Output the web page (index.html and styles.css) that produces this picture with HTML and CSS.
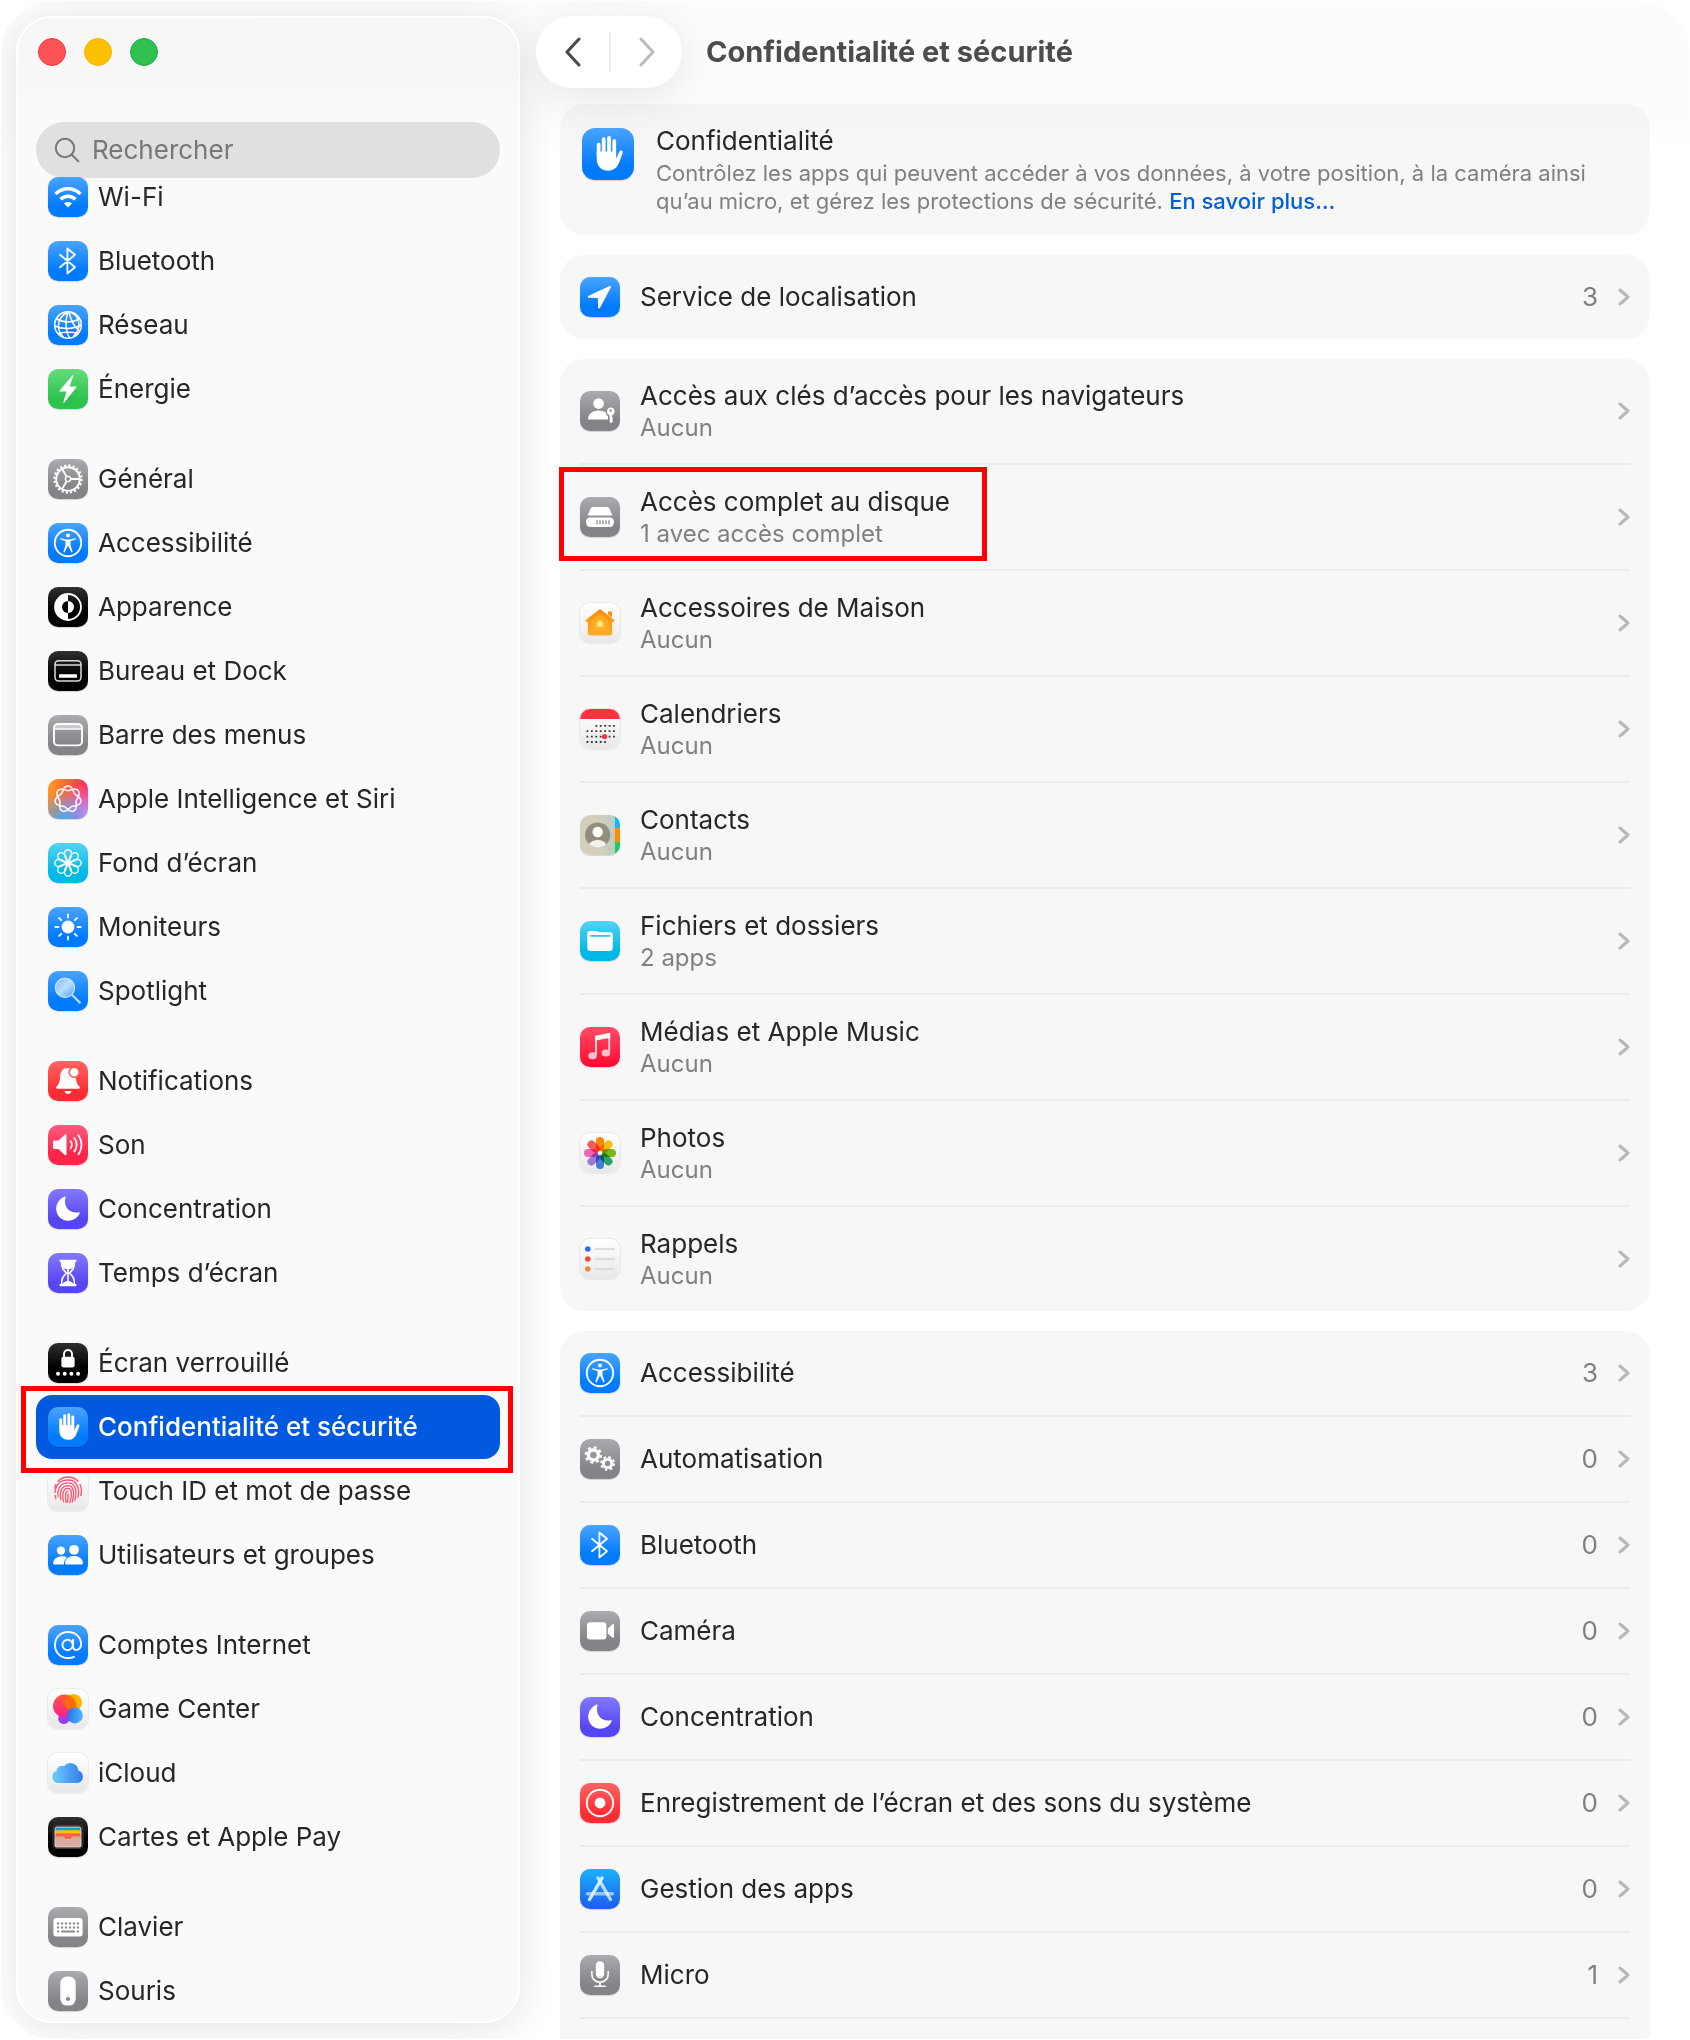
FILE: index.html
```html
<!DOCTYPE html>
<html lang="fr">
<head>
  <meta charset="UTF-8">
  <meta name="viewport" content="width=device-width, initial-scale=1.0">
  <title>Confidentialité et sécurité</title>
  <link rel="stylesheet" href="styles.css">
</head>
<body>
  <!-- icon set, every symbol is drawn on a 40x40 tile -->
  <svg class="sprite" aria-hidden="true">
    <defs>
      <linearGradient id="g-lens" x1="0" y1="0" x2="1" y2="1">
        <stop offset="0" stop-color="#fff" stop-opacity=".35"/><stop offset=".5" stop-color="#fff" stop-opacity=".7"/><stop offset="1" stop-color="#fff" stop-opacity=".2"/>
      </linearGradient>
      <linearGradient id="g-cloud" x1="0" y1="0" x2="1" y2="0">
        <stop offset="0" stop-color="#6fcdf8"/><stop offset="1" stop-color="#2f7bf0"/>
      </linearGradient>
      <linearGradient id="g-pink" x1="0" y1="0" x2="0" y2="1">
        <stop offset="0" stop-color="#ff5a3c"/><stop offset="1" stop-color="#ff1e8c"/>
      </linearGradient>
      <linearGradient id="g-ball" x1="0" y1="0" x2="1" y2="0">
        <stop offset="0" stop-color="#2a6cf0"/><stop offset="1" stop-color="#38b6ff"/>
      </linearGradient>
      <linearGradient id="g-home" x1="0" y1="0" x2="0" y2="1">
        <stop offset="0" stop-color="#ff8a00"/><stop offset="1" stop-color="#ffab2e"/>
      </linearGradient>
    </defs>

    <symbol id="i-wifi" viewBox="0 0 40 40">
      <path d="M7.6 17a17.4 17.4 0 0 1 24.8 0M12.6 22.2a10.6 10.6 0 0 1 14.8 0" fill="none" stroke="#fff" stroke-width="3.6"/>
      <path d="M20 30.6l-4-4.2a5.8 5.8 0 0 1 8 0z" fill="#fff"/>
    </symbol>
    <symbol id="i-bluetooth" viewBox="0 0 40 40">
      <path d="M12 13.8l15 12.4-7.6 6.3V7.5l7.6 6.3L12 26.2" fill="none" stroke="#fff" stroke-width="1.8" stroke-linecap="round" stroke-linejoin="round"/>
    </symbol>
    <symbol id="i-globe" viewBox="0 0 40 40">
      <g fill="none" stroke="#fff" stroke-width="1.5">
        <circle cx="20" cy="20" r="13.3"/>
        <path d="M20 7c-6 3-9.5 8-9.5 13.5 0 5 2 9 5 11.5M20 7c-2 6-2.5 12-1.5 17 .6 4 1.5 6.5 3 9M21 7c1.5 7 4 14 10.5 19M22 7c6 2 8.5 7 9 12 .2 5-2 9-5.5 12"/>
        <path d="M8.5 14c7 4 16 4 23 0M7 21c7 3.5 18 3.5 26-1M10 28.5c6-1.5 14-1.5 20-.5"/>
      </g>
    </symbol>
    <symbol id="i-bolt" viewBox="0 0 40 40">
      <path d="M24.4 6.4L11.6 21.4c-.4.5-.2 1 .5 1h6.3l-3 10.6c-.2.7.5 1 .9.5l12-15c.4-.5.2-1-.5-1h-6.2l3.6-10.6c.3-.8-.4-1-.8-.5z" fill="#fff"/>
    </symbol>
    <symbol id="i-gear" viewBox="0 0 40 40">
      <g fill="none" stroke="#fff">
        <circle cx="20" cy="20" r="13.6" stroke-width="2.2" stroke-dasharray="2.1 2.172"/>
        <circle cx="20" cy="20" r="11.8" stroke-width="2"/>
        <circle cx="20" cy="20" r="2.6" stroke-width="1.4"/>
        <path d="M22.6 20H32M18.7 17.7L14 9.7M18.7 22.3L14 30.3" stroke-width="1.8"/>
      </g>
    </symbol>
    <symbol id="i-access" viewBox="0 0 40 40">
      <circle cx="20" cy="20" r="13.2" fill="none" stroke="#fff" stroke-width="1.9"/>
      <circle cx="20" cy="12.6" r="2" fill="#fff"/>
      <path d="M13 15.3l5 1.2h4l5-1.2c1-.2 1.2 1 .3 1.3l-4.8 1.5v4l2 6.4c.3 1-.9 1.3-1.3.4L20.3 23h-.6l-2.9 5.9c-.4.9-1.6.6-1.3-.4l2-6.4v-4l-4.8-1.5c-.9-.3-.7-1.5.3-1.3z" fill="#fff"/>
    </symbol>
    <symbol id="i-contrast" viewBox="0 0 40 40">
      <circle cx="20" cy="20" r="13" fill="none" stroke="#fff" stroke-width="1.8"/>
      <path d="M20 7a13 13 0 0 0 0 26z" fill="#fff"/>
      <path d="M20 14a6 6 0 0 0 0 12z" fill="#000"/>
      <path d="M20 14a6 6 0 0 1 0 12z" fill="#fff"/>
    </symbol>
    <symbol id="i-dock" viewBox="0 0 40 40">
      <rect x="7" y="9.8" width="26" height="20.2" rx="3.5" fill="none" stroke="#ddd" stroke-width="1.5"/>
      <path d="M7 14h26" stroke="#ddd" stroke-width="1.3"/>
      <rect x="11" y="23.2" width="18" height="3.6" rx=".8" fill="#fff"/>
    </symbol>
    <symbol id="i-menubar" viewBox="0 0 40 40">
      <rect x="6" y="9" width="28" height="21.4" rx="4" fill="none" stroke="#fff" stroke-width="1.9"/>
      <path d="M7 10h26v3.8H7z" fill="#fff" opacity=".45"/>
      <path d="M7 14h26" stroke="#fff" stroke-width="1.5"/>
    </symbol>
    <symbol id="i-siri" viewBox="0 0 40 40">
      <path d="M20 6.8C24.8 6.8 25.1 12.9 26.6 14.8S33.9 18.3 32.9 22.9 25.8 26.5 23.6 27.6 18.6 34 14.3 31.9 12.3 24.2 11.8 21.9 6.7 15.5 9.7 11.8 17.6 11.6 20 11.6 27.3 8 30.3 11.8 28.7 19.5 28.2 21.9 30 29.8 25.7 31.9 18.5 28.6 16.4 27.6 8.2 27.6 7.1 22.9 11.9 16.6 13.4 14.8 15.2 6.8 20 6.8z" fill="none" stroke="#fff" stroke-width="1.7" stroke-opacity=".9"/>
    </symbol>
    <symbol id="i-flower" viewBox="0 0 40 40">
      <g fill="none" stroke="#fff" stroke-width="1.4">
        <g id="petal-pair">
          <path d="M20 20c-1.2-3-3.6-5.5-3.6-9a3.6 4.2 0 0 1 7.2 0c0 3.5-2.4 6-3.6 9zM20 20c1.2 3 3.6 5.5 3.6 9a3.6 4.2 0 0 1-7.2 0c0-3.5 2.4-6 3.6-9z"/>
        </g>
        <use href="#petal-pair" transform="rotate(45 20 20)"/>
        <use href="#petal-pair" transform="rotate(90 20 20)"/>
        <use href="#petal-pair" transform="rotate(135 20 20)"/>
      </g>
    </symbol>
    <symbol id="i-sun" viewBox="0 0 40 40">
      <circle cx="20" cy="20" r="6.4" fill="#fff"/>
      <path d="M20 7.4v3M20 29.6v3M7.4 20h3M29.6 20h3M11.1 11.1l2.1 2.1M26.8 26.8l2.1 2.1M11.1 28.9l2.1-2.1M26.8 13.2l2.1-2.1" stroke="#fff" stroke-width="1.9" stroke-linecap="round"/>
    </symbol>
    <symbol id="i-spotlight" viewBox="0 0 40 40">
      <circle cx="17" cy="16.8" r="9.6" fill="url(#g-lens)" stroke="#cfe6ff" stroke-width="1.2"/>
      <path d="M24.4 24.2l7.4 7.4" stroke="#b8dcff" stroke-width="2.2" stroke-linecap="round"/>
    </symbol>
    <symbol id="i-bell" viewBox="0 0 40 40">
      <path d="M20 7c-5 0-7.6 3.5-7.8 8-.2 5-.8 7.5-3.6 10.5-1 1.2-.6 2.3.9 2.3h21c1.5 0 1.9-1.1.9-2.3-2.8-3-3.4-5.5-3.6-10.5-.2-4.5-2.8-8-7.8-8zM16.5 30h7c-.5 2-1.7 3-3.5 3s-3-1-3.5-3z" fill="#fff"/>
      <circle cx="26.2" cy="11.2" r="5" fill="#fff" stroke="#ff5650" stroke-width="1.5"/>
    </symbol>
    <symbol id="i-speaker" viewBox="0 0 40 40">
      <path d="M6.5 15.5h4l6.3-5.8c.8-.7 1.7-.3 1.7.7v18.8c0 1-.9 1.4-1.7.7l-6.3-5.8h-4c-.9 0-1.5-.6-1.5-1.5V17c0-.9.6-1.5 1.5-1.5z" fill="#fff"/>
      <path d="M22.5 16a6.5 6.5 0 0 1 0 7.6M26.3 13a11 11 0 0 1 0 13.6M30.3 10.2a16 16 0 0 1 0 19.2" fill="none" stroke="#fff" stroke-width="1.7" stroke-linecap="round"/>
    </symbol>
    <symbol id="i-moon" viewBox="0 0 40 40">
      <path d="M16.6 7.6c.6-.3 1.1.2.9.8-2.6 8.8 4.2 16.6 13.2 14.8.8-.2 1.2.4.9 1C29.6 28.9 25.2 31.7 20 31.7 13.4 31.7 8.2 26.4 8.2 20c0-5.5 3.4-10.3 8.4-12.4z" fill="#fff"/>
    </symbol>
    <symbol id="i-hourglass" viewBox="0 0 40 40">
      <path d="M12.5 7.8h15M12.5 32.2h15" stroke="#fff" stroke-width="2.2" stroke-linecap="round"/>
      <path d="M13.5 8c0 7 1.5 8.5 5 12-3.5 3.5-5 5-5 12M26.5 8c0 7-1.5 8.5-5 12 3.5 3.5 5 5 5 12" fill="none" stroke="#fff" stroke-width="1.7"/>
      <path d="M14 8h12c0 4-.6 5.8-2 7.4l-4 1.4-4-1.4C14.6 13.8 14 12 14 8zM19.2 16h1.6v12c2.6.5 4.2 1.5 4.7 3h-11c.5-1.5 2.1-2.5 4.7-3z" fill="#fff"/>
    </symbol>
    <symbol id="i-lock" viewBox="0 0 40 40">
      <rect x="13.4" y="13.8" width="13.2" height="10.6" rx="1.8" fill="#fff"/>
      <path d="M16 14.5V11a4 4 0 0 1 8 0v3.5" fill="none" stroke="#fff" stroke-width="1.9"/>
      <g fill="#fff"><circle cx="10" cy="30.8" r="2"/><circle cx="16.7" cy="30.8" r="2"/><circle cx="23.4" cy="30.8" r="2"/><circle cx="30.1" cy="30.8" r="2"/></g>
    </symbol>
    <symbol id="i-hand" viewBox="0 0 40 40">
      <path d="M12.8 21V12.6M16.7 20V8.6M20.8 20V7.6M24.8 21V10" stroke="#fff" stroke-width="2.9" stroke-linecap="round"/>
      <path d="M11.35 18h14.9v5.4l2.4-5c1-2 3.3-1.2 2.6 1-.8 2.4-1.7 4.6-2.6 7-1.5 4-4 6.4-8.4 6.4-5.4 0-8.9-3.4-8.9-9z" fill="#fff"/>
    </symbol>
    <symbol id="i-touch" viewBox="0 0 40 40">
      <g fill="none" stroke="#ff4f6c" stroke-width="1.3" stroke-linecap="round">
        <path d="M10 10.2a14 14 0 0 1 20 0M6.8 17a13.5 13.5 0 0 1 1.2-3.5M32 13.5c1.5 3 1.8 7 .8 11"/>
        <path d="M7 21.5c.5-7 4.5-12.5 13-12.5s12 7 10 17.5M10 25.5c-.8-9 3.5-13.7 10-13.7 7.2 0 9.5 7 7 17.2M12.8 28.5c-1.5-9 1.5-13.9 7.2-13.9 5.5 0 7 6.4 4.2 16.6M15.4 30.5c-1.5-8-.2-13.1 4.6-13.1 4 0 4.3 6 1.8 14.2M18.2 31.5c-1.2-7-1-11.3 1.8-11.3"/>
        <path d="M7.3 24.5c0 1 .2 2 .6 3M20 23c.2 3 0 5.5-.6 8"/>
      </g>
    </symbol>
    <symbol id="i-users" viewBox="0 0 40 40">
      <g fill="#fff">
        <circle cx="13" cy="15.6" r="4.2"/><circle cx="26" cy="14.8" r="4.9"/>
        <path d="M19 22.6c-3.5-2.7-13.3-1.5-13.9 5.6 0 .8.4 1.3 1.2 1.3h9.5c.2-2.8 1.2-5.2 3.2-6.9zM17 28c.6-9.5 17.4-9.5 18 0 0 .9-.5 1.5-1.4 1.5H18.4c-.9 0-1.4-.6-1.4-1.5z"/>
      </g>
    </symbol>
    <symbol id="i-at" viewBox="0 0 40 40">
      <g fill="none" stroke="#fff" stroke-width="1.9" stroke-linecap="round">
        <circle cx="19.6" cy="20" r="5.2"/>
        <path d="M25 14.8V22c0 4.5 8 4 8-3 0-7-5.5-12-13-12S7 12.5 7 20s5.5 13 13 13c2.5 0 4.5-.4 6-1.2"/>
      </g>
    </symbol>
    <symbol id="i-gamecenter" viewBox="0 0 40 40">
      <circle cx="15.8" cy="29.5" r="5.6" fill="#a03cf0"/>
      <circle cx="16.4" cy="17" r="11.4" fill="url(#g-pink)"/>
      <circle cx="25.4" cy="13.6" r="8.6" fill="#ffb400"/>
      <path d="M17.8 9.5a8.6 8.6 0 0 0 7.6 12.7c1 0 1.5-.1 2-.2a11.4 11.4 0 0 0-7.6-15.9c-.8.8-1.5 2-2 3.4z" fill="#ff6a00"/>
      <circle cx="26.8" cy="26.4" r="8" fill="url(#g-ball)" opacity=".95"/>
    </symbol>
    <symbol id="i-icloud" viewBox="0 0 40 40">
      <path d="M10.5 30a6.3 6.3 0 0 1-1.8-12.3 5 5 0 0 1 7.3-4.5 8 8 0 0 1 14.3 4.4A6.4 6.4 0 0 1 29.8 30z" fill="url(#g-cloud)"/>
    </symbol>
    <symbol id="i-wallet" viewBox="0 0 40 40">
      <rect x="5" y="8.4" width="30" height="23" rx="3.5" fill="#000" stroke="#555" stroke-width=".8"/>
      <rect x="6.5" y="9.5" width="27" height="21" rx="2.5" fill="#e8dcd4"/>
      <path d="M7.5 10.5h25V14h-25z" fill="#1e96e8"/>
      <path d="M7.5 13.3h25v3.4h-25z" fill="#ffc400"/>
      <path d="M7.5 16.2h25v6h-25z" fill="#ff6048"/>
      <path d="M7.5 19.5h7c2 0 2.5 3.3 5.5 3.3s3.5-3.3 5.5-3.3h7v8.3a1.7 1.7 0 0 1-1.7 1.7H9.2a1.7 1.7 0 0 1-1.7-1.7z" fill="#d8aca0"/>
    </symbol>
    <symbol id="i-keyboard" viewBox="0 0 40 40">
      <rect x="5.4" y="11" width="29.2" height="18.4" rx="2.6" fill="#fff"/>
      <path d="M9 16.4h22M9 20.4h22" stroke="#8a8a8f" stroke-width="2" stroke-dasharray="2.2 1.76"/>
      <path d="M9 24.4h2.2M13 24.4h14M28.8 24.4H31" stroke="#8a8a8f" stroke-width="2"/>
    </symbol>
    <symbol id="i-mouse" viewBox="0 0 40 40">
      <rect x="12.3" y="5.6" width="15.4" height="29" rx="6.5" fill="#fff"/>
      <path d="M20 26.5c1-.8 2.4-.1 2.2 1.6-.2 1.5-1.2 2-2.2 1.7-1 .3-2-.2-2.2-1.7-.2-1.7 1.2-2.4 2.2-1.6zM20 25.5c0-1 .5-1.5 1-1.6 0 .9-.4 1.5-1 1.6z" fill="#8a8a8f"/>
    </symbol>
    <symbol id="i-location" viewBox="0 0 40 40">
      <path d="M29.7 9.1L8.6 18.8c-1.3.7-.9 2 .4 2l8.9.2.2 9.2c0 1.4 1.5 1.7 2.1.4L30.9 10.3c.4-1-.2-1.6-1.2-1.2z" fill="#fff"/>
    </symbol>
    <symbol id="i-passkey" viewBox="0 0 40 40">
      <g fill="#fff">
        <circle cx="18.6" cy="12.6" r="5.3"/>
        <path d="M8 28c0-5 5-8.5 10.6-8.5 2.7 0 5.2.8 7.2 2.1.2 1.6 1 2.9 2.2 3.8v3.1H8.8c-.5 0-.8-.2-.8-.5z"/>
        <path fill-rule="evenodd" d="M30.6 16.6a4 4 0 0 1 1.5 7.7v1.9l1.1 1.2-1.1 1.2 1.1 1.3-2.3 2.3-1.3-1.2v-6.7a4 4 0 0 1 1-7.7zm0 1.6a1.3 1.3 0 1 0 0 2.6 1.3 1.3 0 0 0 0-2.6z"/>
      </g>
    </symbol>
    <symbol id="i-disk" viewBox="0 0 40 40">
      <path d="M13.3 10h13.4c1.5 0 2.5.7 3 2l2.6 6.5H7.7l2.6-6.5c.5-1.3 1.5-2 3-2zM10 20.6h20c2.3 0 4 1.7 4 4.3 0 3-1.7 5.1-4 5.1H10c-2.3 0-4-2-4-5.1 0-2.6 1.7-4.3 4-4.3z" fill="#fff"/>
      <path d="M17 23.2v4M20 23.2v4M23 23.2v4M26 23.2v4M29 23.2v4" stroke="#8a8a8f" stroke-width="1.3"/>
    </symbol>
    <symbol id="i-home" viewBox="0 0 40 40">
      <path d="M20 6l14.2 11c.8.7.4 1.8-.6 1.8h-1.4V30c0 1.6-1 2.6-2.6 2.6H10.4c-1.6 0-2.6-1-2.6-2.6V18.8H6.4c-1 0-1.4-1.1-.6-1.8zM28 8.6h4v6l-4-3z" fill="url(#g-home)"/>
      <path d="M20 12l8 6.4V27H12v-8.6z" fill="#ffa51a" stroke="#ffb93e"/>
      <path d="M20 15.5l4.5 3.7V25h-9v-5.8z" fill="#ffc23c"/>
      <path d="M20 18l2.3 2v3.2h-4.6V20z" fill="#ffe9a0"/>
    </symbol>
    <symbol id="i-calendar" viewBox="0 0 40 40">
      <path d="M0 0h40v10H0z" fill="#ff3440"/>
      <path d="M15.4 16.8h19.4M6.5 22.2h28.4M6.5 27.6h28.4M6.5 33h19.4" stroke="#333" stroke-width="1.8" stroke-dasharray="1.8 2.63"/>
      <circle cx="24.6" cy="27.5" r="2.6" fill="#ff3440"/>
    </symbol>
    <symbol id="i-contacts" viewBox="0 0 40 40">
      <path d="M35 0h5v13h-5z" fill="#10b4ff"/><path d="M35 13h5v14h-5z" fill="#ff8c00"/><path d="M35 27h5v13h-5z" fill="#18cf5c"/>
      <circle cx="17.7" cy="20" r="12.6" fill="#958d7c"/>
      <circle cx="17.7" cy="17" r="5.2" fill="#fff"/>
      <path d="M9 29.2c4-5.6 13.4-5.6 17.4 0a12.6 12.6 0 0 1-17.4 0z" fill="#f2f1ec"/>
    </symbol>
    <symbol id="i-folder" viewBox="0 0 40 40">
      <path d="M10 10h6c1.5 0 2 1.2 3.5 1.2H30c1.8 0 2.8 1 2.8 2.8H7.3v-1.2C7.3 11 8.3 10 10 10zM7.3 15.8h25.5v11.3c0 1.8-1 2.8-2.8 2.8H10c-1.8 0-2.7-1-2.7-2.8z" fill="#fff"/>
      <path d="M7.3 13.5h3v3h-3zM30 13.5h2.8v3H30z" fill="#fff"/>
    </symbol>
    <symbol id="i-music" viewBox="0 0 40 40">
      <path d="M16 28V10.5L29.2 7.2V24.5" fill="none" stroke="#ffd5dc" stroke-width="1.9"/>
      <path d="M15.1 8.7l15-3v5l-15 3z" fill="#fff" opacity=".92"/>
      <ellipse cx="12.6" cy="28.7" rx="4.3" ry="3.5" fill="#ffc2cb"/><ellipse cx="25.9" cy="26" rx="4.3" ry="3.5" fill="#ffc2cb"/>
    </symbol>
    <symbol id="i-photos" viewBox="0 0 40 40">
      <g class="petals">
        <rect x="16" y="4" width="8" height="14" rx="4" fill="#ff8a00"/>
        <rect x="16" y="4" width="8" height="14" rx="4" fill="#ffc20a" transform="rotate(45 20 20)"/>
        <rect x="16" y="4" width="8" height="14" rx="4" fill="#7cc21a" transform="rotate(90 20 20)"/>
        <rect x="16" y="4" width="8" height="14" rx="4" fill="#2fae72" transform="rotate(135 20 20)"/>
        <rect x="16" y="4" width="8" height="14" rx="4" fill="#4a86e8" transform="rotate(180 20 20)"/>
        <rect x="16" y="4" width="8" height="14" rx="4" fill="#a283e0" transform="rotate(225 20 20)"/>
        <rect x="16" y="4" width="8" height="14" rx="4" fill="#f76cc0" transform="rotate(270 20 20)"/>
        <rect x="16" y="4" width="8" height="14" rx="4" fill="#ff5a5a" transform="rotate(315 20 20)"/>
      </g>
    </symbol>
    <symbol id="i-reminders" viewBox="0 0 40 40">
      <path d="M15 10h20M15 20h20M15 30h20" stroke="#d4d4d6" stroke-width="1.5"/>
      <circle cx="7.8" cy="10" r="2.8" fill="#2c6cff"/><circle cx="7.8" cy="20" r="2.8" fill="#f04a3e"/><circle cx="7.8" cy="30" r="2.8" fill="#f0883a"/>
    </symbol>
    <symbol id="i-gears" viewBox="0 0 40 40">
      <g fill="none" stroke="#fff">
        <circle cx="13.4" cy="16" r="5" stroke-width="3.4"/>
        <circle cx="13.4" cy="16" r="7.6" stroke-width="2.2" stroke-dasharray="3 2.97"/>
        <circle cx="27.6" cy="24.4" r="4.2" stroke-width="3"/>
        <circle cx="27.6" cy="24.4" r="6.4" stroke-width="2" stroke-dasharray="2.5 2.526"/>
      </g>
    </symbol>
    <symbol id="i-camera" viewBox="0 0 40 40">
      <rect x="7" y="11.2" width="19.4" height="17.4" rx="3" fill="#fff"/>
      <path d="M27.8 17.4l4.5-4c.8-.7 1.7-.3 1.7.7v11.6c0 1-.9 1.4-1.7.7l-4.5-4z" fill="#fff"/>
    </symbol>
    <symbol id="i-record" viewBox="0 0 40 40">
      <circle cx="20" cy="20" r="13.2" fill="none" stroke="#fff" stroke-width="1.9"/>
      <circle cx="20" cy="20" r="5.4" fill="#fff"/>
    </symbol>
    <symbol id="i-appstore" viewBox="0 0 40 40">
      <g stroke-width="3.4" stroke-linecap="round">
        <path d="M7.5 24.8h25" stroke="#fff" stroke-opacity=".55"/>
        <path d="M18 9l12.5 21.5" stroke="#fff" stroke-opacity=".7"/>
        <path d="M22 9L9.5 30.5" stroke="#d9f6ff" stroke-opacity=".92"/>
      </g>
    </symbol>
    <symbol id="i-mic" viewBox="0 0 40 40">
      <rect x="15.8" y="6.2" width="8.4" height="17" rx="4.2" fill="#fff"/>
      <path d="M11.8 16.5v2.7c0 4.6 3.5 8 8.2 8s8.2-3.4 8.2-8v-2.7M20 27.5v3.8M14.8 31.3h10.4" fill="none" stroke="#fff" stroke-width="1.6" stroke-linecap="round"/>
    </symbol>
    <symbol id="i-chevron" viewBox="0 0 12 18">
      <path d="M2 2l8 7-8 7" fill="none" stroke="currentColor" stroke-width="3" stroke-linecap="round" stroke-linejoin="round"/>
    </symbol>
  </svg>

  <div class="window">
    <aside class="sidebar">
      <div class="lights">
        <button class="light close" aria-label="Fermer"></button>
        <button class="light minimize" aria-label="Réduire"></button>
        <button class="light zoom" aria-label="Agrandir"></button>
      </div>
      <div class="search">
        <label for="q" aria-label="Rechercher">
          <svg viewBox="0 0 26 26"><circle cx="11" cy="11" r="9.2"/><path d="M17.8 17.8l6.6 6.6"/></svg>
        </label>
        <input type="text" id="q" placeholder="Rechercher" autocomplete="off">
      </div>

      <nav class="nav" aria-label="Réglages">
        <ul>
          <li><a href="#wifi"><svg class="icon blue"><use href="#i-wifi"/></svg>Wi-Fi</a></li>
          <li><a href="#bluetooth"><svg class="icon blue"><use href="#i-bluetooth"/></svg>Bluetooth</a></li>
          <li><a href="#reseau"><svg class="icon blue"><use href="#i-globe"/></svg>Réseau</a></li>
          <li><a href="#energie"><svg class="icon green"><use href="#i-bolt"/></svg>Énergie</a></li>
        </ul>
        <ul>
          <li><a href="#general"><svg class="icon gray"><use href="#i-gear"/></svg>Général</a></li>
          <li><a href="#accessibilite"><svg class="icon blue"><use href="#i-access"/></svg>Accessibilité</a></li>
          <li><a href="#apparence"><svg class="icon black"><use href="#i-contrast"/></svg>Apparence</a></li>
          <li><a href="#dock"><svg class="icon black"><use href="#i-dock"/></svg>Bureau et Dock</a></li>
          <li><a href="#menus"><svg class="icon gray"><use href="#i-menubar"/></svg>Barre des menus</a></li>
          <li><a href="#siri"><svg class="icon rainbow"><use href="#i-siri"/></svg>Apple Intelligence et Siri</a></li>
          <li><a href="#fond"><svg class="icon cyan"><use href="#i-flower"/></svg>Fond d’écran</a></li>
          <li><a href="#moniteurs"><svg class="icon blue"><use href="#i-sun"/></svg>Moniteurs</a></li>
          <li><a href="#spotlight"><svg class="icon blue"><use href="#i-spotlight"/></svg>Spotlight</a></li>
        </ul>
        <ul>
          <li><a href="#notifications"><svg class="icon red"><use href="#i-bell"/></svg>Notifications</a></li>
          <li><a href="#son"><svg class="icon pink"><use href="#i-speaker"/></svg>Son</a></li>
          <li><a href="#concentration"><svg class="icon purple"><use href="#i-moon"/></svg>Concentration</a></li>
          <li><a href="#temps"><svg class="icon purple"><use href="#i-hourglass"/></svg>Temps d’écran</a></li>
        </ul>
        <ul>
          <li><a href="#verrou"><svg class="icon black"><use href="#i-lock"/></svg>Écran verrouillé</a></li>
          <li class="marked"><a href="#confidentialite" aria-current="page"><svg class="icon blue"><use href="#i-hand"/></svg>Confidentialité et sécurité</a></li>
          <li><a href="#touchid"><svg class="icon white"><use href="#i-touch"/></svg>Touch ID et mot de passe</a></li>
          <li><a href="#utilisateurs"><svg class="icon blue"><use href="#i-users"/></svg>Utilisateurs et groupes</a></li>
        </ul>
        <ul>
          <li><a href="#comptes"><svg class="icon blue"><use href="#i-at"/></svg>Comptes Internet</a></li>
          <li><a href="#gamecenter"><svg class="icon white"><use href="#i-gamecenter"/></svg>Game Center</a></li>
          <li><a href="#icloud"><svg class="icon white"><use href="#i-icloud"/></svg>iCloud</a></li>
          <li><a href="#cartes"><svg class="icon black"><use href="#i-wallet"/></svg>Cartes et Apple Pay</a></li>
        </ul>
        <ul>
          <li><a href="#clavier"><svg class="icon gray"><use href="#i-keyboard"/></svg>Clavier</a></li>
          <li><a href="#souris"><svg class="icon gray"><use href="#i-mouse"/></svg>Souris</a></li>
        </ul>
      </nav>
    </aside>

    <main>
      <header class="toolbar">
        <div class="history">
          <button aria-label="Précédent"><svg viewBox="0 0 18 30"><path d="M15 2L3 15l12 13"/></svg></button>
          <button aria-label="Suivant" disabled><svg viewBox="0 0 18 30"><path d="M3 2l12 13L3 28"/></svg></button>
        </div>
        <h1>Confidentialité et sécurité</h1>
      </header>

      <div class="content">
        <section class="card intro">
          <svg class="icon big blue"><use href="#i-hand"/></svg>
          <div>
            <h2>Confidentialité</h2>
            <p>Contrôlez les apps qui peuvent accéder à vos données, à votre position, à la caméra ainsi qu’au micro, et gérez les protections de sécurité. <a href="#plus">En savoir plus…</a></p>
          </div>
        </section>

        <ul class="card rows">
          <li><a href="#localisation"><svg class="icon blue"><use href="#i-location"/></svg><span class="label">Service de localisation</span><span class="count">3</span><svg class="chevron"><use href="#i-chevron"/></svg></a></li>
        </ul>

        <ul class="card rows tall">
          <li><a href="#cles"><svg class="icon gray"><use href="#i-passkey"/></svg><span class="label">Accès aux clés d’accès pour les navigateurs<small>Aucun</small></span><svg class="chevron"><use href="#i-chevron"/></svg></a></li>
          <li class="marked"><a href="#disque"><svg class="icon gray"><use href="#i-disk"/></svg><span class="label">Accès complet au disque<small>1 avec accès complet</small></span><svg class="chevron"><use href="#i-chevron"/></svg></a></li>
          <li><a href="#maison"><svg class="icon white"><use href="#i-home"/></svg><span class="label">Accessoires de Maison<small>Aucun</small></span><svg class="chevron"><use href="#i-chevron"/></svg></a></li>
          <li><a href="#calendriers"><svg class="icon white"><use href="#i-calendar"/></svg><span class="label">Calendriers<small>Aucun</small></span><svg class="chevron"><use href="#i-chevron"/></svg></a></li>
          <li><a href="#contacts"><svg class="icon sand"><use href="#i-contacts"/></svg><span class="label">Contacts<small>Aucun</small></span><svg class="chevron"><use href="#i-chevron"/></svg></a></li>
          <li><a href="#fichiers"><svg class="icon cyan"><use href="#i-folder"/></svg><span class="label">Fichiers et dossiers<small>2 apps</small></span><svg class="chevron"><use href="#i-chevron"/></svg></a></li>
          <li><a href="#medias"><svg class="icon music"><use href="#i-music"/></svg><span class="label">Médias et Apple Music<small>Aucun</small></span><svg class="chevron"><use href="#i-chevron"/></svg></a></li>
          <li><a href="#photos"><svg class="icon white"><use href="#i-photos"/></svg><span class="label">Photos<small>Aucun</small></span><svg class="chevron"><use href="#i-chevron"/></svg></a></li>
          <li><a href="#rappels"><svg class="icon white"><use href="#i-reminders"/></svg><span class="label">Rappels<small>Aucun</small></span><svg class="chevron"><use href="#i-chevron"/></svg></a></li>
        </ul>

        <ul class="card rows last">
          <li><a href="#p-accessibilite"><svg class="icon blue"><use href="#i-access"/></svg><span class="label">Accessibilité</span><span class="count">3</span><svg class="chevron"><use href="#i-chevron"/></svg></a></li>
          <li><a href="#p-automatisation"><svg class="icon gray"><use href="#i-gears"/></svg><span class="label">Automatisation</span><span class="count">0</span><svg class="chevron"><use href="#i-chevron"/></svg></a></li>
          <li><a href="#p-bluetooth"><svg class="icon blue"><use href="#i-bluetooth"/></svg><span class="label">Bluetooth</span><span class="count">0</span><svg class="chevron"><use href="#i-chevron"/></svg></a></li>
          <li><a href="#p-camera"><svg class="icon gray"><use href="#i-camera"/></svg><span class="label">Caméra</span><span class="count">0</span><svg class="chevron"><use href="#i-chevron"/></svg></a></li>
          <li><a href="#p-concentration"><svg class="icon purple"><use href="#i-moon"/></svg><span class="label">Concentration</span><span class="count">0</span><svg class="chevron"><use href="#i-chevron"/></svg></a></li>
          <li><a href="#p-ecran"><svg class="icon red"><use href="#i-record"/></svg><span class="label">Enregistrement de l’écran et des sons du système</span><span class="count">0</span><svg class="chevron"><use href="#i-chevron"/></svg></a></li>
          <li><a href="#p-apps"><svg class="icon store"><use href="#i-appstore"/></svg><span class="label">Gestion des apps</span><span class="count">0</span><svg class="chevron"><use href="#i-chevron"/></svg></a></li>
          <li><a href="#p-micro"><svg class="icon gray"><use href="#i-mic"/></svg><span class="label">Micro</span><span class="count">1</span><svg class="chevron"><use href="#i-chevron"/></svg></a></li>
        </ul>
      </div>
    </main>
  </div>
</body>
</html>
```
FILE: styles.css
```css
*,
*::after {
  box-sizing: border-box;
  margin: 0;
  padding: 0;
}
body {
  background: #fff;
  color: #262626;
  font-family: Inter, "Liberation Sans", sans-serif;
  font-size: 26px;
  line-height: 32px;
}
ul {
  list-style: none;
}
a {
  color: inherit;
  text-decoration: none;
}
button {
  border: 0;
  background: none;
}
.sprite {
  position: absolute;
  width: 0;
  height: 0;
}
.window {
  display: flex;
  height: calc(100vh - 2px);
  margin: 1px;
  border-radius: 52px;
  background: linear-gradient(#fcfcfc 110px, #fff 150px);
  overflow: hidden;
}

/* sidebar */
.sidebar {
  flex: 0 0 504px;
  min-width: 0;
  margin: 15px 0 16px 15px;
  padding: 20px 18px 0;
  border: 2px solid #fff;
  border-radius: 36px;
  background: linear-gradient(#f6f6f6, #fafafa 120px);
  box-shadow: 0 6px 40px rgba(0, 0, 0, 0.11);
}
.lights {
  display: flex;
  gap: 18px;
  padding-left: 2px;
  margin-bottom: 56px;
}
.light {
  width: 28px;
  height: 28px;
  border-radius: 50%;
}
.close {
  background: #ff5257;
  border: 1px solid #f5363c;
}
.minimize {
  background: #fbc100;
  border: 1px solid #f2b400;
}
.zoom {
  background: #30c052;
  border: 1px solid #1fb03f;
}
.search {
  display: flex;
  align-items: center;
  gap: 12px;
  height: 56px;
  padding: 0 18px;
  border-radius: 28px;
  background: #e0e0e0;
}
.search svg {
  display: block;
  width: 26px;
  height: 26px;
  fill: none;
  stroke: #757575;
  stroke-width: 2;
  stroke-linecap: round;
}
.search input {
  flex: 1;
  min-width: 0;
  border: 0;
  outline: 0;
  background: none;
  font: inherit;
}
.search input::placeholder {
  color: #777;
}
/* the list is scrolled a little way under the search field */
.nav {
  display: flex;
  flex-direction: column;
  gap: 26px;
  margin-top: -13px;
  position: relative;
}
.nav a {
  display: flex;
  align-items: center;
  gap: 10px;
  height: 64px;
  padding-left: 12px;
  border-radius: 16px;
}
.nav a[aria-current] {
  background: #0059df;
  color: #fff;
  font-weight: 500;
}

/* icons */
.icon {
  flex: none;
  width: 40px;
  height: 40px;
  border-radius: 10px;
  box-shadow: 0 1px 1px rgba(0, 0, 0, 0.15);
}
.big {
  width: 52px;
  height: 52px;
  border-radius: 13px;
}
.blue {
  background: linear-gradient(#4aa3ff, #007aff 75%);
}
.green {
  background: linear-gradient(#66dc7c, #2cc24c 75%);
}
.gray {
  background: linear-gradient(#aaaaaf, #838388 75%);
}
.black {
  background: linear-gradient(#303030, #000 60%);
}
.red {
  background: linear-gradient(#ff6464, #ff2d33 75%);
}
.pink {
  background: linear-gradient(#ff5a7c, #ff2448 75%);
}
.purple {
  background: linear-gradient(#8379ff, #5646f2 75%);
}
.cyan {
  background: linear-gradient(#52d4f4, #00b8e6 75%);
}
.music {
  background: linear-gradient(#ff4c68, #ff0a30);
}
.store {
  background: linear-gradient(#1cb0fc, #1c5cf0);
}
.sand {
  background: linear-gradient(90deg, #d2d0bc 50%, #b4ccc4);
}
.rainbow {
  background: radial-gradient(circle at 40% 110%, #38b0ff, transparent 65%), radial-gradient(circle at 100% 90%, #e28cff, transparent 60%), linear-gradient(100deg, #ffa01e, #ff2a5a 85%);
}
.white {
  background: linear-gradient(#fff, #e8e8e8);
  box-shadow: 0 0 1px 1px rgba(0, 0, 0, 0.06);
}
.petals rect {
  mix-blend-mode: multiply;
}

/* main pane */
main {
  flex: 1;
  min-width: 0;
}
.toolbar {
  display: flex;
  align-items: center;
  gap: 24px;
  padding: 15px 16px 16px;
}
.history {
  display: flex;
  align-items: center;
  height: 72px;
  border-radius: 36px;
  background: #fff;
  box-shadow: 0 8px 40px rgba(0, 0, 0, 0.09);
}
.history button {
  display: flex;
  align-items: center;
  justify-content: center;
  width: 73px;
  height: 40px;
  color: #4a4a4a;
}
.history button + button {
  border-left: 2px solid #ededed;
  color: #bbb;
}
.history svg {
  width: 18px;
  height: 30px;
  fill: none;
  stroke: currentColor;
  stroke-width: 3;
  stroke-linecap: round;
  stroke-linejoin: round;
}
h1 {
  color: #4c4c4c;
  font-size: 29px;
  font-weight: 700;
}
.content {
  display: flex;
  flex-direction: column;
  gap: 20px;
  padding: 0 39px 0 40px;
}
.card {
  border-radius: 24px;
  background: rgba(0, 0, 0, 0.03);
}
.intro {
  display: flex;
  gap: 22px;
  padding: 21px 22px 20px;
}
.intro .icon {
  margin-top: 3px;
}
.intro h2 {
  font-size: 26px;
  font-weight: 400;
  line-height: 32px;
}
.intro p {
  margin-top: 2px;
  color: #808080;
  font-size: 22px;
  line-height: 28px;
}
.intro p a {
  color: #0060df;
  font-weight: 500;
}
.rows li {
  padding: 0 20px;
}
.rows a {
  display: flex;
  align-items: center;
  height: 84px;
}
.tall a {
  height: 104px;
}
.rows li + li a {
  height: 86px;
  border-top: 2px solid #ebebeb;
}
.tall li + li a {
  height: 106px;
}
.last {
  padding-bottom: 40px;
}
.last li:last-child a {
  height: 88px;
  border-bottom: 2px solid #ebebeb;
}
.label {
  flex: 1;
  padding-left: 20px;
}
.tall .label {
  padding-top: 2px;
}
.label small {
  display: block;
  color: #808080;
  font-size: 24px;
  line-height: 32px;
}
.count {
  color: #808080;
}
.chevron {
  width: 12px;
  height: 18px;
  margin-left: 20px;
  color: #b8b8b8;
}

/* red frames round the steps to follow */
.marked {
  position: relative;
}
.marked::after {
  content: "";
  position: absolute;
  border: 5px solid #f00;
  pointer-events: none;
}
.nav .marked::after {
  inset: -9px -13px -14px -15px;
  z-index: 1;
}
.rows .marked::after {
  top: 4px;
  left: -1px;
  width: 428px;
  height: 94px;
}
```
